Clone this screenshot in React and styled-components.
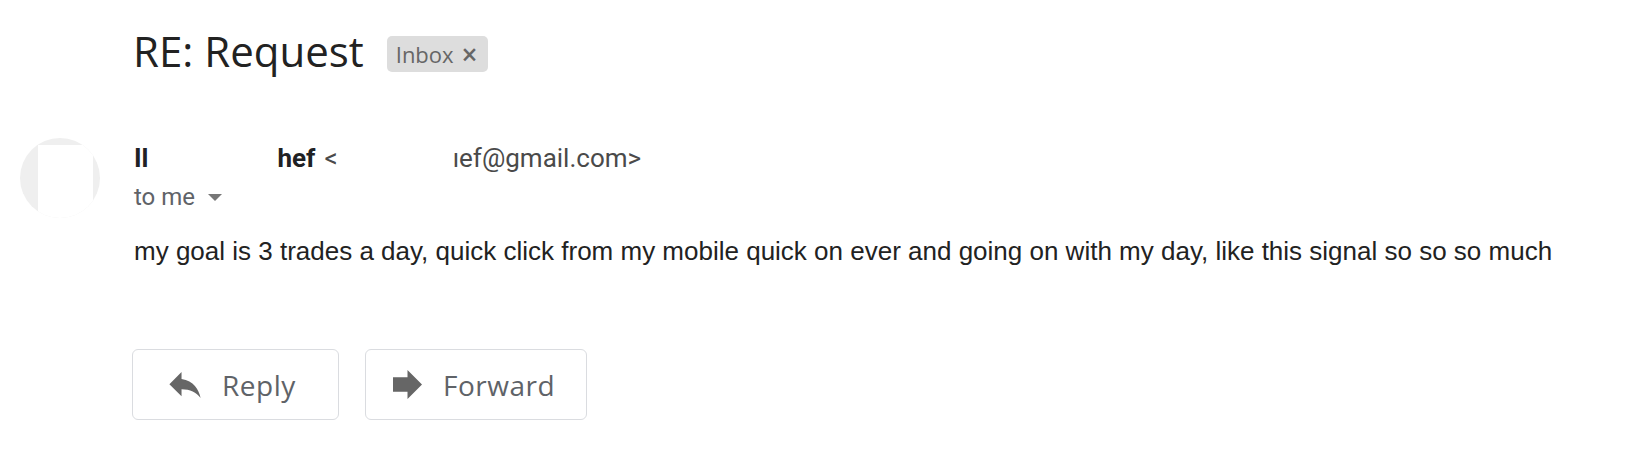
import React from 'react'
import styled, { createGlobalStyle } from 'styled-components'

const GlobalStyle = createGlobalStyle`
    body {
        margin: 0;
        background: #fff;
    }
`

const App = () => {
    return (
        <>
            <GlobalStyle />
            <Page>
                <SubjectRow>
                    <Subject>RE: Request</Subject>
                    <Chip>
                        Inbox <ChipClose>×</ChipClose>
                    </Chip>
                </SubjectRow>

                <Message>
                    <Avatar>
                        <AvatarMask />
                    </Avatar>
                    <Content>
                        <Sender>
                            <Name>Il</Name>
                            <Gap $w={129} />
                            <Name>hef</Name>
                            <Gap $w={9} />
                            <Email>&lt;</Email>
                            <Gap $w={115} />
                            <Email>ıef@gmail.com&gt;</Email>
                        </Sender>
                        <Recipient>
                            to me <Caret />
                        </Recipient>
                        <Body>
                            my goal is 3 trades a day, quick click from my mobile quick on ever and going on with my day, like this signal so so so much
                        </Body>
                    </Content>
                </Message>

                <Actions>
                    <ActionButton $w={207} $pad={36}>
                        <svg width="32" height="26" viewBox="3 5 18 15">
                            <path d="M10 9V5l-7 7 7 7v-4.1c5 0 8.5 1.6 11 5.1-1-5-4-10-11-11z" fill="#666" />
                        </svg>
                        Reply
                    </ActionButton>
                    <ActionButton $w={222} $pad={27}>
                        <svg width="29" height="29" viewBox="4 4 16 16">
                            <path d="M12 8V4l8 8-8 8v-4H4V8z" fill="#666" />
                        </svg>
                        Forward
                    </ActionButton>
                </Actions>
            </Page>
        </>
    )
}

const Page = styled.div`
    width: 1638px;
    height: 452px;
    box-sizing: border-box;
    padding-top: 27px;
`

const SubjectRow = styled.div`
    display: flex;
    align-items: flex-start;
    gap: 23px;
    padding-left: 133px;
    height: 48px;
`

const Subject = styled.h1`
    margin: 0;
    font-family: "Open Sans", sans-serif;
    font-weight: 400;
    font-size: 42px;
    line-height: 48px;
    color: #222;
`

const Chip = styled.span`
    display: flex;
    align-items: center;
    gap: 8px;
    height: 36px;
    margin-top: 9px;
    padding: 0 10px 0 9px;
    border-radius: 5px;
    background: #dddddd;
    font-family: "Open Sans", sans-serif;
    font-size: 22px;
    color: #666;
`

const ChipClose = styled.span`
    font-size: 28px;
    font-weight: 600;
    line-height: 1;
`

const Message = styled.div`
    display: grid;
    grid-template-columns: 80px 1fr;
    column-gap: 34px;
    padding-left: 20px;
    margin-top: 63px;
`

const Avatar = styled.div`
    width: 80px;
    height: 80px;
    border-radius: 50%;
    background: #efefef;
    position: relative;
    overflow: hidden;
`

const AvatarMask = styled.div`
    position: absolute;
    left: 18px;
    top: 7px;
    width: 55px;
    height: 73px;
    background: #fff;
`

const Content = styled.div`
    display: flex;
    flex-direction: column;
    padding-top: 5px;
`

const Sender = styled.div`
    display: flex;
    align-items: baseline;
    font-family: Roboto, sans-serif;
    line-height: 30px;
`

const Name = styled.span`
    font-size: 26px;
    font-weight: 700;
    color: #202124;
`

const Gap = styled.span`
    display: inline-block;
    width: ${p => p.$w}px;
`

const Email = styled.span`
    font-size: 26px;
    color: #4a4a4a;
`

const Recipient = styled.div`
    display: flex;
    align-items: center;
    gap: 13px;
    margin-top: 9px;
    font-family: Roboto, sans-serif;
    font-size: 24px;
    color: #5f6368;
    line-height: 30px;
`

const Caret = styled.span`
    width: 0;
    height: 0;
    border-left: 7px solid transparent;
    border-right: 7px solid transparent;
    border-top: 7px solid #777;
`

const Body = styled.p`
    margin: 24px 0 0;
    font-family: "Liberation Sans", Arial, sans-serif;
    font-size: 26px;
    line-height: 30px;
    color: #222;
`

const Actions = styled.div`
    display: flex;
    gap: 26px;
    padding-left: 132px;
    margin-top: 83px;
`

const ActionButton = styled.button`
    display: flex;
    align-items: center;
    gap: 21px;
    width: ${p => p.$w}px;
    height: 71px;
    padding: 0 0 0 ${p => p.$pad}px;
    background: #fff;
    border: 1px solid #dadce0;
    border-radius: 6px;
    font-family: "Open Sans", sans-serif;
    font-size: 28px;
    letter-spacing: 0.5px;
    color: #5f6368;
    cursor: pointer;
`

export default App
